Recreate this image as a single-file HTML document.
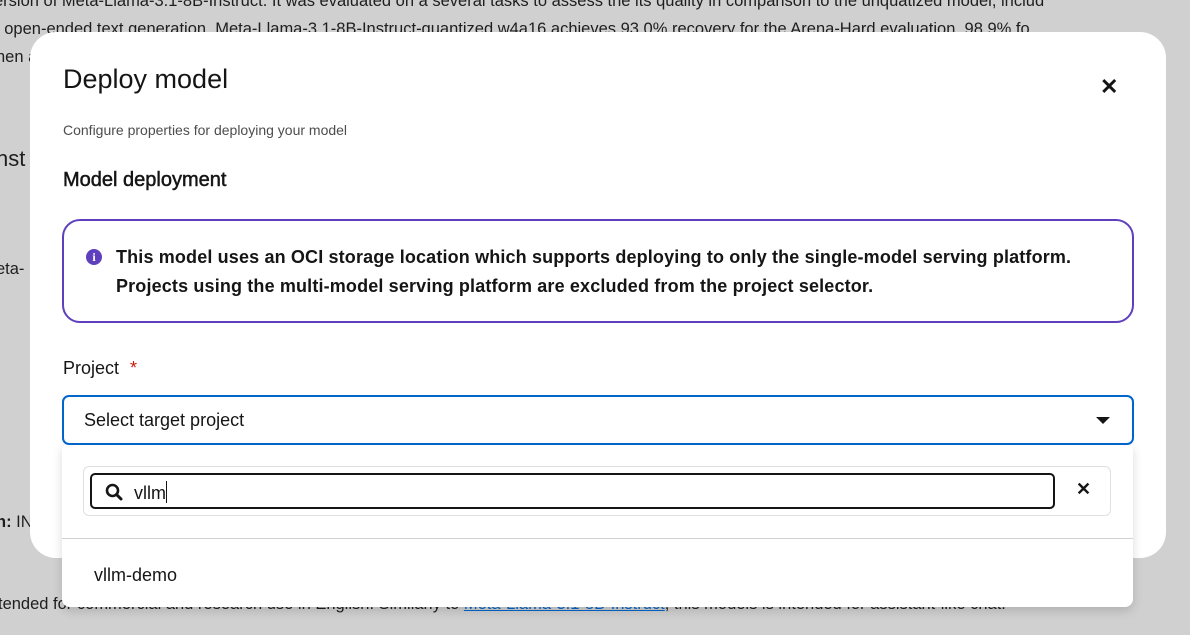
<!DOCTYPE html>
<html><head><style>
*{box-sizing:border-box;margin:0;padding:0}
body{width:1190px;height:635px;overflow:hidden;background:#d0d0d0;font-family:"Liberation Sans",sans-serif;color:#151515;position:relative}
.bg{position:absolute;font-size:16.5px;color:#1e1e1e;white-space:nowrap}
.modal{position:absolute;left:30px;top:32px;width:1136px;height:526px;background:#fff;border-radius:26px}
.abs{position:absolute}
</style></head><body>
<div class="bg" style="left:-6px;top:-8px">ersion of Meta-Llama-3.1-8B-Instruct. It was evaluated on a several tasks to assess the its quality in comparison to the unquatized model, includ</div>
<div class="bg" style="left:-4px;top:20px">l open-ended text generation. Meta-Llama-3.1-8B-Instruct-quantized.w4a16 achieves 93.0% recovery for the Arena-Hard evaluation, 98.9% fo</div>
<div class="bg" style="left:-4px;top:48px">hen a</div>
<div class="bg" style="left:-4px;top:146px;font-size:22px">nst</div>
<div class="bg" style="left:-4px;top:260px">eta-</div>
<div class="bg" style="left:-4px;top:513px"><b>n:</b> IN</div>
<div class="bg" style="left:-2px;top:595px">tended for commercial and research use in English. Similarly to <u style="color:#0066cc">Meta-Llama-3.1-8B-Instruct</u>, this models is intended for assistant-like chat.</div>

<div class="modal">
  <div class="abs" style="left:33px;top:32px;font-size:27px">Deploy model</div>
  <div class="abs" style="left:1070px;top:42px;font-size:22px;font-weight:bold">✕</div>
  <div class="abs" style="left:33px;top:90px;font-size:14px;color:#4d4d4d">Configure properties for deploying your model</div>
  <div class="abs" style="left:33px;top:137px;font-size:20px;-webkit-text-stroke:0.5px #151515">Model deployment</div>
  <div class="abs" style="left:32px;top:187px;width:1072px;height:104px;border:2px solid #5e40be;border-radius:18px">
    <div class="abs" style="left:22px;top:28px;width:16px;height:16px;border-radius:50%;background:#5e40be;color:#fff;font-size:12px;font-weight:bold;text-align:center;line-height:16px;font-family:'Liberation Serif',serif">i</div>
    <div class="abs" style="left:52px;top:22px;font-size:18px;letter-spacing:0.15px;font-weight:bold;line-height:29px;color:#151515">This model uses an OCI storage location which supports deploying to only the single-model serving platform.<br>Projects using the multi-model serving platform are excluded from the project selector.</div>
  </div>
  <div class="abs" style="left:33px;top:326px;font-size:18px">Project <span style="color:#c9190b;margin-left:6px">*</span></div>
  <div class="abs" style="left:32px;top:363px;width:1072px;height:50px;border:2px solid #0066cc;border-radius:7px">
    <div class="abs" style="left:20px;top:13px;font-size:18px">Select target project</div>
    <div class="abs" style="right:22px;top:20px;width:0;height:0;border-left:7px solid transparent;border-right:7px solid transparent;border-top:7px solid #151515"></div>
  </div>
</div>

<div class="abs" style="left:62px;top:445px;width:1071px;height:162px;background:#fff;border-radius:0 0 8px 8px;box-shadow:0 4px 10px rgba(0,0,0,.15)">
  <div class="abs" style="left:21px;top:21px;width:1028px;height:50px;border:1px solid #e0e0e0;border-radius:6px">
    <div class="abs" style="left:6px;top:6px;width:965px;height:36px;border:2px solid #151515;border-radius:5px">
      <svg class="abs" style="left:13px;top:8px" width="18" height="18" viewBox="0 0 18 18"><circle cx="7.5" cy="7.5" r="5.5" fill="none" stroke="#151515" stroke-width="2.6"/><path d="M11.5 11.5L16 16" stroke="#151515" stroke-width="3" stroke-linecap="round"/></svg>
      <div class="abs" style="left:42px;top:6px;font-size:18px">vllm<span style="display:inline-block;width:1px;height:22px;background:#151515;vertical-align:-4px"></span></div>
    </div>
    <div class="abs" style="left:992px;top:12px;font-size:18px;font-weight:bold">✕</div>
  </div>
  <div class="abs" style="left:0;top:93px;width:1071px;height:1px;background:#d2d2d2"></div>
  <div class="abs" style="left:32px;top:120px;font-size:18px">vllm-demo</div>
</div>
</body></html>
